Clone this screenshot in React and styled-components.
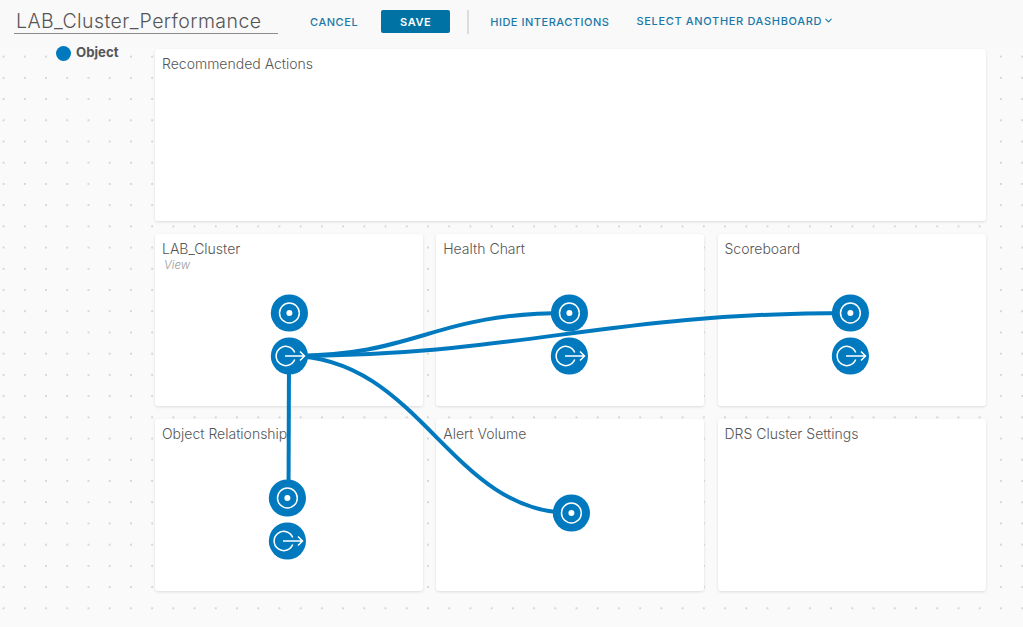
import React from "react";
import styled, { createGlobalStyle } from "styled-components";
import { ChevronDown } from "lucide-react";

const GlobalStyle = createGlobalStyle`
    html, body {
        margin: 0;
        padding: 0;
        height: 100%;
        overflow: hidden;
        background-color: #fafafa;
    }
`;

const Page = styled.div`
    position: relative;
    width: 1023px;
    height: 627px;
    font-family: Inter, "Liberation Sans", sans-serif;
    color: #565656;
    background-color: #fafafa;
`;

const Toolbar = styled.header`
    display: flex;
    align-items: center;
    height: 48px;
    padding: 0 0 5px 14px;
    box-sizing: border-box;
    background-color: #f9f9f9;
`;

const TitleInput = styled.div`
    width: 264px;
    height: 24px;
    padding-left: 2px;
    box-sizing: border-box;
    border-bottom: 1px solid #8c8c8c;
    font-size: 19.5px;
    font-weight: 300;
    line-height: 23px;
    letter-spacing: 0.43px;
    color: #565656;
`;

const LinkButton = styled.button`
    display: inline-flex;
    align-items: center;
    gap: 1px;
    padding: 0;
    margin-left: ${(p) => p.$left}px;
    margin-bottom: ${(p) => (p.$raised ? 2 : 0)}px;
    border: none;
    background: none;
    font-family: inherit;
    font-size: 11px;
    font-weight: 500;
    letter-spacing: ${(p) => p.$spacing}px;
    color: #1a78a8;
    white-space: nowrap;
`;

const SaveButton = styled.button`
    width: 69px;
    height: 23px;
    margin-left: 23px;
    padding: 0;
    border: none;
    border-radius: 2px;
    background-color: #0072a3;
    color: #ffffff;
    font-family: inherit;
    font-size: 11px;
    font-weight: 600;
    letter-spacing: 0.6px;
`;

const Divider = styled.div`
    width: 2px;
    height: 24px;
    margin-left: 17px;
    background-color: #dddddd;
`;

const Workspace = styled.main`
    display: flex;
    align-items: flex-start;
    height: 579px;
    padding: 1px 0 0 56px;
    box-sizing: border-box;
    background-image: radial-gradient(circle at center, #c2c2c2 0, #c2c2c2 0.5px, transparent 1px);
    background-size: 21.22px 21.22px;
    background-position: -7px -2px;
`;

const Legend = styled.div`
    display: flex;
    align-items: center;
    gap: 5px;
    width: 99px;
    margin-top: -7px;
    font-size: 13.2px;
    font-weight: 700;
    line-height: 16px;
    color: #565656;
`;

const LegendDot = styled.span`
    width: 15px;
    height: 15px;
    margin-top: 4px;
    border-radius: 50%;
    background-color: #0079be;
`;

const Grid = styled.div`
    display: grid;
    grid-template-columns: repeat(3, 268px);
    grid-template-rows: repeat(3, 172px);
    column-gap: 13.25px;
    row-gap: 13px;
`;

const Card = styled.section`
    grid-column: ${(p) => (p.$wide ? "1 / -1" : "auto")};
    padding: 6px 7px;
    box-sizing: border-box;
    background-color: #ffffff;
    border-radius: 3px;
    box-shadow: 0 1px 3px rgba(0, 0, 0, 0.12);
`;

const CardTitle = styled.div`
    font-size: 14px;
    font-weight: 300;
    line-height: 18px;
    color: #565656;
`;

const CardSubtitle = styled.div`
    margin: 1px 0 0 2px;
    font-size: 11.5px;
    font-style: italic;
    font-weight: 300;
    line-height: 12px;
    color: #9a9a9a;
`;

const Wires = styled.svg`
    position: absolute;
    left: 0;
    top: 0;
    pointer-events: none;
`;

const Wire = styled.path`
    fill: none;
    stroke: #0079be;
    stroke-width: 4px;
`;

const NodeIcon = styled.svg`
    position: absolute;
    left: ${(p) => p.$x - 19}px;
    top: ${(p) => p.$y - 19}px;
    width: 38px;
    height: 38px;
`;

function InputNode({ x, y }) {
    return (
        <NodeIcon $x={x} $y={y} viewBox="0 0 38 38">
            <circle cx="19.4" cy="19" r="18.6" fill="#0079be" />
            <circle cx="19.4" cy="19" r="9.9" fill="none" stroke="#fff" strokeWidth="1.5" />
            <circle cx="19.4" cy="19" r="3" fill="#fff" />
        </NodeIcon>
    );
}

function OutputNode({ x, y }) {
    return (
        <NodeIcon $x={x} $y={y} viewBox="0 0 38 38">
            <circle cx="19.4" cy="19" r="18.6" fill="#0079be" />
            <path
                d="M24.7 15.5 A9.6 9.6 0 1 0 24.7 22.5"
                fill="none"
                stroke="#fff"
                strokeWidth="1.5"
            />
            <path d="M15 19 H35 M30 14.5 L34.5 19 L30 23.5" fill="none" stroke="#fff" strokeWidth="1.5" />
        </NodeIcon>
    );
}

const cards = [
    { title: "LAB_Cluster", subtitle: "View" },
    { title: "Health Chart" },
    { title: "Scoreboard" },
    { title: "Object Relationship" },
    { title: "Alert Volume" },
    { title: "DRS Cluster Settings" },
];

export default function App() {
    return (
        <Page>
            <GlobalStyle />
            <Toolbar>
                <TitleInput>LAB_Cluster_Performance</TitleInput>
                <LinkButton $left={32} $spacing={0.55}>CANCEL</LinkButton>
                <SaveButton>SAVE</SaveButton>
                <Divider />
                <LinkButton $left={21} $spacing={0.52}>HIDE INTERACTIONS</LinkButton>
                <LinkButton $left={27} $spacing={0.66} $raised>
                    SELECT ANOTHER DASHBOARD
                    <ChevronDown size={11} strokeWidth={2.4} />
                </LinkButton>
            </Toolbar>
            <Workspace>
                <Legend>
                    <LegendDot />
                    Object
                </Legend>
                <Grid>
                    <Card $wide>
                        <CardTitle>Recommended Actions</CardTitle>
                    </Card>
                    {cards.map((card) => (
                        <Card key={card.title}>
                            <CardTitle>{card.title}</CardTitle>
                            {card.subtitle && <CardSubtitle>{card.subtitle}</CardSubtitle>}
                        </Card>
                    ))}
                </Grid>
            </Workspace>
            <Wires width="1023" height="627" viewBox="0 0 1023 627">
                <Wire d="M289 356 L288.5 498" />
                <Wire d="M289 356 C 420 356, 430 313, 569 313" />
                <Wire d="M289 356 C 520 356, 600 313, 850 313" />
                <Wire d="M289 356 C 420 356, 450 513, 571 513" />
            </Wires>
            <InputNode x={289} y={313} />
            <OutputNode x={289} y={356} />
            <InputNode x={569} y={313} />
            <OutputNode x={569} y={356} />
            <InputNode x={850} y={313} />
            <OutputNode x={850} y={356} />
            <InputNode x={287} y={498} />
            <OutputNode x={287} y={541} />
            <InputNode x={571} y={513} />
        </Page>
    );
}
